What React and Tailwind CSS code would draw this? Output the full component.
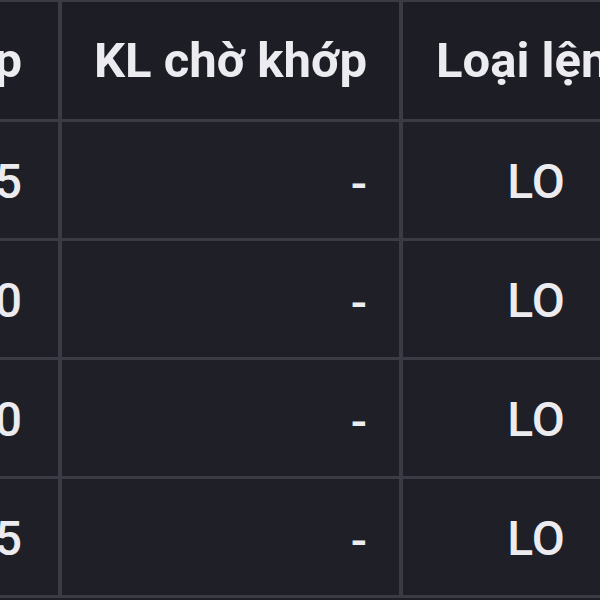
import React from 'react';

const rows = [
  { price: '23,45', pending: '-', type: 'LO' },
  { price: '23,50', pending: '-', type: 'LO' },
  { price: '23,40', pending: '-', type: 'LO' },
  { price: '23,45', pending: '-', type: 'LO' },
];

const App = () => {
  return (
    <div className="w-[600px] h-[600px] overflow-hidden bg-[#1e1f27] text-[#ececf0]" style={{ fontFamily: 'Roboto, "Noto Sans", sans-serif' }}>
      {/* Header */}
      <div className="flex h-[122px] border-t-2 border-b-[3px] border-[#3a3b44] bg-[#1c1d25] font-bold text-[49px]">
        <div className="w-[62px] shrink-0 border-r-4 border-[#3a3b44] flex items-center justify-end pr-9 overflow-hidden whitespace-nowrap">
          Giá khớp
        </div>
        <div className="w-[341px] shrink-0 border-r-4 border-[#3a3b44] flex items-center justify-end pr-8 whitespace-nowrap">
          KL chờ khớp
        </div>
        <div className="w-[266px] shrink-0 flex items-center justify-center whitespace-nowrap">
          Loại lệnh
        </div>
      </div>

      {/* Rows */}
      {rows.map((r, i) => (
        <div key={i} className="flex h-[119px] border-b-[3px] border-[#3a3b44] font-medium text-[48px]">
          <div className="w-[62px] shrink-0 border-r-4 border-[#3a3b44] flex items-center justify-end pr-9 pt-1 overflow-hidden whitespace-nowrap">
            {r.price}
          </div>
          <div className="w-[341px] shrink-0 border-r-4 border-[#3a3b44] flex items-center justify-end pr-8 pt-2">
            {r.pending}
          </div>
          <div className="w-[266px] shrink-0 flex items-center justify-center pt-1">
            {r.type}
          </div>
        </div>
      ))}
    </div>
  );
};

export default App;
